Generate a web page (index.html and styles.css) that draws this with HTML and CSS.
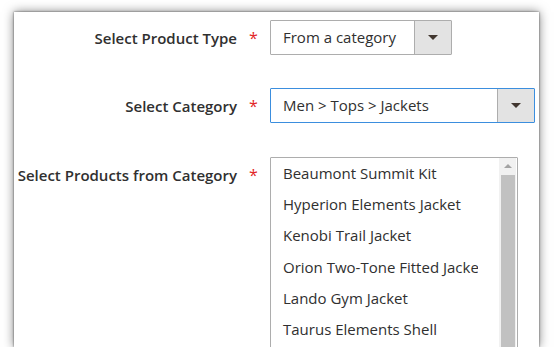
FILE: index.html
```html
<!DOCTYPE html>
<html lang="en">
<head>
    <meta charset="UTF-8">
    <meta name="viewport" content="width=device-width, initial-scale=1.0">
    <title>Product Widget</title>
    <link rel="stylesheet" href="styles.css">
</head>
<body>
    <div class="card">
        <div class="row">
            <div class="label">Select Product Type</div>
            <div class="star">*</div>
            <div class="select type">
                <span class="value">From a category</span>
                <span class="btn"><i class="caret"></i></span>
            </div>
        </div>
        <div class="row second">
            <div class="label">Select Category</div>
            <div class="star">*</div>
            <div class="select category">
                <span class="value">Men &gt; Tops &gt; Jackets</span>
                <span class="btn"><i class="caret"></i></span>
            </div>
        </div>
        <div class="row">
            <div class="label">Select Products from Category</div>
            <div class="star">*</div>
            <div class="list">
                <div class="items">
                    <div class="item">Beaumont Summit Kit</div>
                    <div class="item">Hyperion Elements Jacket</div>
                    <div class="item">Kenobi Trail Jacket</div>
                    <div class="item">Orion Two-Tone Fitted Jacket</div>
                    <div class="item">Lando Gym Jacket</div>
                    <div class="item">Taurus Elements Shell</div>
                </div>
                <div class="scroll">
                    <i class="up"></i>
                    <div class="thumb"></div>
                </div>
            </div>
        </div>
    </div>
</body>
</html>
```
FILE: styles.css
```css
body
{
    margin:0;
    padding:12px 0 0 14px;
    background:white;
    font-family:"Open Sans","Noto Sans",sans-serif;
    color:#303030;
}
.card
{
    width:525px;
    height:335px;
    background:white;
    box-shadow:0 0 2px rgba(0,0,0,.6),0 0 10px rgba(0,0,0,.5);
    overflow:hidden;
    padding-top:8px;
    box-sizing:border-box;
}
.row
{
    display:flex;
    align-items:flex-start;
    margin-bottom:33px;
}
.second
{
    margin-bottom:34px;
}
.label
{
    width:223px;
    text-align:right;
    font-size:15px;
    font-weight:600;
    line-height:33px;
    padding-top:2px;
    white-space:nowrap;
}
.star
{
    width:33px;
    text-align:center;
    color:#e22626;
    font-size:16px;
    line-height:34px;
    padding-top:1px;
}
.select
{
    display:flex;
    height:35px;
    border:1px solid #adadad;
    box-sizing:border-box;
    border-radius:1px;
    font-size:15px;
}
.type
{
    width:182px;
}
.category
{
    width:265px;
    border-color:#3b8ede;
}
.value
{
    flex:1;
    padding-left:12px;
    line-height:33px;
}
.btn
{
    width:36px;
    background:#e3e3e3;
    border-left:1px solid #adadad;
    display:flex;
    align-items:center;
    justify-content:center;
}
.caret
{
    width:0;
    height:0;
    border-left:5px solid transparent;
    border-right:5px solid transparent;
    border-top:5px solid #41362f;
}
.list
{
    display:flex;
    width:248px;
    height:220px;
    border:1px solid #adadad;
    box-sizing:border-box;
    border-radius:1px;
}
.items
{
    flex:1;
    min-width:0;
}
.item
{
    font-size:15px;
    line-height:31.2px;
    padding-left:12px;
    margin-right:21px;
    white-space:nowrap;
    overflow:hidden;
}
.scroll
{
    width:17px;
    margin-right:1px;
    background:#f1f1f1;
    display:flex;
    flex-direction:column;
    align-items:center;
}
.up
{
    margin-top:6px;
    width:0;
    height:0;
    border-left:4px solid transparent;
    border-right:4px solid transparent;
    border-bottom:4px solid #a3a3a3;
}
.thumb
{
    margin-top:7px;
    width:14px;
    flex:1;
    background:#c1c1c1;
}
```
